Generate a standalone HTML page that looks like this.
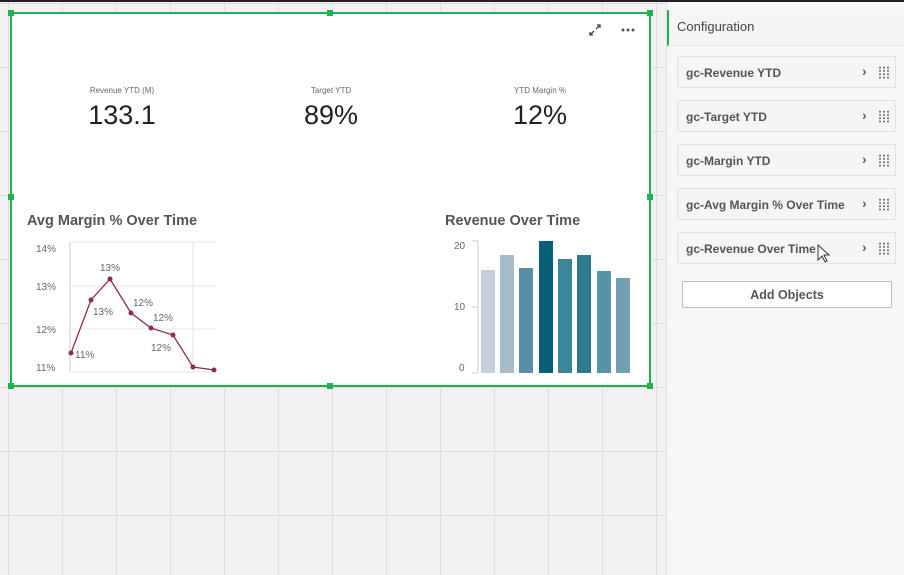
<!DOCTYPE html>
<html><head><meta charset="utf-8"><style>
*{margin:0;padding:0;box-sizing:border-box}
body{width:904px;height:575px;overflow:hidden;position:relative;background:#f2f2f2;font-family:"Liberation Sans",sans-serif}
.top{position:absolute;left:0;top:0;width:904px;height:2px;background:#222}
.grid{position:absolute;left:0;top:2px;width:666px;height:573px;
background-image:linear-gradient(to right,#dedede 1px,transparent 1px),linear-gradient(to bottom,#dedede 1px,transparent 1px);
background-size:54px 64px;background-position:8px 65px}
.w{position:absolute;left:10px;top:12px;width:641px;height:375px;background:#fff;border:2px solid #21b24f}
.h{position:absolute;width:6px;height:6px;background:#21b24f}
.kl{position:absolute;font-size:8px;color:#666;text-align:center;width:160px}
.kv{position:absolute;font-size:27px;color:#222;text-align:center;width:160px}
.t{position:absolute;font-size:14.5px;font-weight:bold;color:#555}
.p{position:absolute;left:666px;top:2px;width:238px;height:573px;background:#f7f7f7;border-left:1px solid #e2e2e2}
.ph{position:absolute;left:0;top:8px;width:238px;height:36px;background:#f5f5f5;border-left:2px solid #21b24f;border-bottom:1px solid #e6e6e6;font-size:13px;color:#444;padding:9px 0 0 8px}
.it{position:absolute;left:10px;width:219px;height:32px;background:#f5f5f5;border:1px solid #e2e2e2;border-radius:2px;font-size:12px;font-weight:bold;color:#555;padding:9px 0 0 8px}
.it .c{position:absolute;left:184px;top:6px;font-size:14px;color:#666}
.it .d{position:absolute;left:200px;top:9px;width:11px;height:13px;background-image:radial-gradient(circle,#777 0.9px,transparent 1.1px);background-size:4px 3.3px}
.btn{position:absolute;left:15px;top:279px;width:210px;height:27px;background:#fff;border:1px solid #bbb;border-radius:2px;font-size:12.5px;font-weight:bold;color:#555;text-align:center;padding-top:6px}
</style></head><body>
<div class="top"></div>
<div class="grid"></div>
<div class="w">
<div class="kl" style="left:30px;top:72px">Revenue YTD (M)</div>
<div class="kv" style="left:30px;top:86px">133.1</div>
<div class="kl" style="left:239px;top:72px">Target YTD</div>
<div class="kv" style="left:239px;top:86px">89%</div>
<div class="kl" style="left:448px;top:72px">YTD Margin %</div>
<div class="kv" style="left:448px;top:86px">12%</div>
<div class="t" style="left:15px;top:199px">Avg Margin % Over Time</div>
<div class="t" style="left:433px;top:199px">Revenue Over Time</div>
<svg style="position:absolute;left:570px;top:6px" width="60" height="20">
<g stroke="#444" stroke-width="1.3" fill="none"><path d="M8 15l4-4M8 12v3h3M18 5l-4 4M15 5h3v3"/></g>
<g fill="#555"><circle cx="41" cy="10" r="1.5"/><circle cx="46" cy="10" r="1.5"/><circle cx="51" cy="10" r="1.5"/></g>
</svg>
</div>
<div class="h" style="left:8px;top:10px"></div><div class="h" style="left:327px;top:10px"></div><div class="h" style="left:647px;top:10px"></div>
<div class="h" style="left:8px;top:194px"></div><div class="h" style="left:647px;top:194px"></div>
<div class="h" style="left:8px;top:383px"></div><div class="h" style="left:327px;top:383px"></div><div class="h" style="left:647px;top:383px"></div>
<svg style="position:absolute;left:0;top:0" width="660" height="385" font-family="Liberation Sans" font-size="10" fill="#666">
<g stroke="#e6e6e6"><line x1="70" y1="242" x2="216" y2="242"/><line x1="70" y1="286" x2="216" y2="286"/><line x1="70" y1="329" x2="216" y2="329"/><line x1="193" y1="242" x2="193" y2="372"/></g>
<line x1="70" y1="242" x2="70" y2="372" stroke="#ccc"/><line x1="70" y1="372" x2="216" y2="372" stroke="#e6e6e6"/>
<text x="36" y="252">14%</text><text x="36" y="290">13%</text><text x="36" y="333">12%</text><text x="36" y="371">11%</text>
<polyline points="71,353 91,300 110,279 131,313 151,328 173,335 193,367 214,370" fill="none" stroke="#8c2c5a" stroke-width="1.3"/>
<g fill="#8c2c5a"><circle cx="71" cy="353" r="2.5"/><circle cx="91" cy="300" r="2.5"/><circle cx="110" cy="279" r="2.5"/><circle cx="131" cy="313" r="2.5"/><circle cx="151" cy="328" r="2.5"/><circle cx="173" cy="335" r="2.5"/><circle cx="193" cy="367" r="2.5"/><circle cx="214" cy="370" r="2.5"/></g>
<text x="75" y="358">11%</text><text x="93" y="315">13%</text><text x="100" y="271">13%</text><text x="133" y="306">12%</text><text x="153" y="321">12%</text><text x="151" y="351">12%</text>
<line x1="478" y1="241" x2="478" y2="373" stroke="#ccc"/>
<g stroke="#ccc"><line x1="472" y1="241" x2="478" y2="241"/><line x1="472" y1="307" x2="478" y2="307"/><line x1="472" y1="373" x2="478" y2="373"/></g>
<text x="454" y="249">20</text><text x="454" y="310">10</text><text x="459" y="371">0</text>
<rect x="481" y="270" width="14" height="103" fill="#c3d0dc"/>
<rect x="500" y="255" width="14" height="118" fill="#a6bdc9"/>
<rect x="519" y="268" width="14" height="105" fill="#578fa6"/>
<rect x="539" y="241" width="14" height="132" fill="#0a5f78"/>
<rect x="558" y="259" width="14" height="114" fill="#3b8499"/>
<rect x="577" y="255" width="14" height="118" fill="#2e7b8f"/>
<rect x="597" y="271" width="14" height="102" fill="#5792a7"/>
<rect x="616" y="278" width="14" height="95" fill="#72a0b3"/>
</svg>
<div class="p">
<div class="ph">Configuration</div>
<div class="it" style="top:54px">gc-Revenue YTD<span class="c">›</span><span class="d"></span></div>
<div class="it" style="top:98px">gc-Target YTD<span class="c">›</span><span class="d"></span></div>
<div class="it" style="top:142px">gc-Margin YTD<span class="c">›</span><span class="d"></span></div>
<div class="it" style="top:186px">gc-Avg Margin % Over Time<span class="c">›</span><span class="d"></span></div>
<div class="it" style="top:230px">gc-Revenue Over Time<span class="c">›</span><span class="d"></span></div>
<div class="btn">Add Objects</div>
<svg style="position:absolute;left:150px;top:242px" width="14" height="20"><path d="M1 1v15l4-4 3 6 2-1-3-6h5z" fill="#fff" stroke="#333"/></svg>
</div>
</body></html>
